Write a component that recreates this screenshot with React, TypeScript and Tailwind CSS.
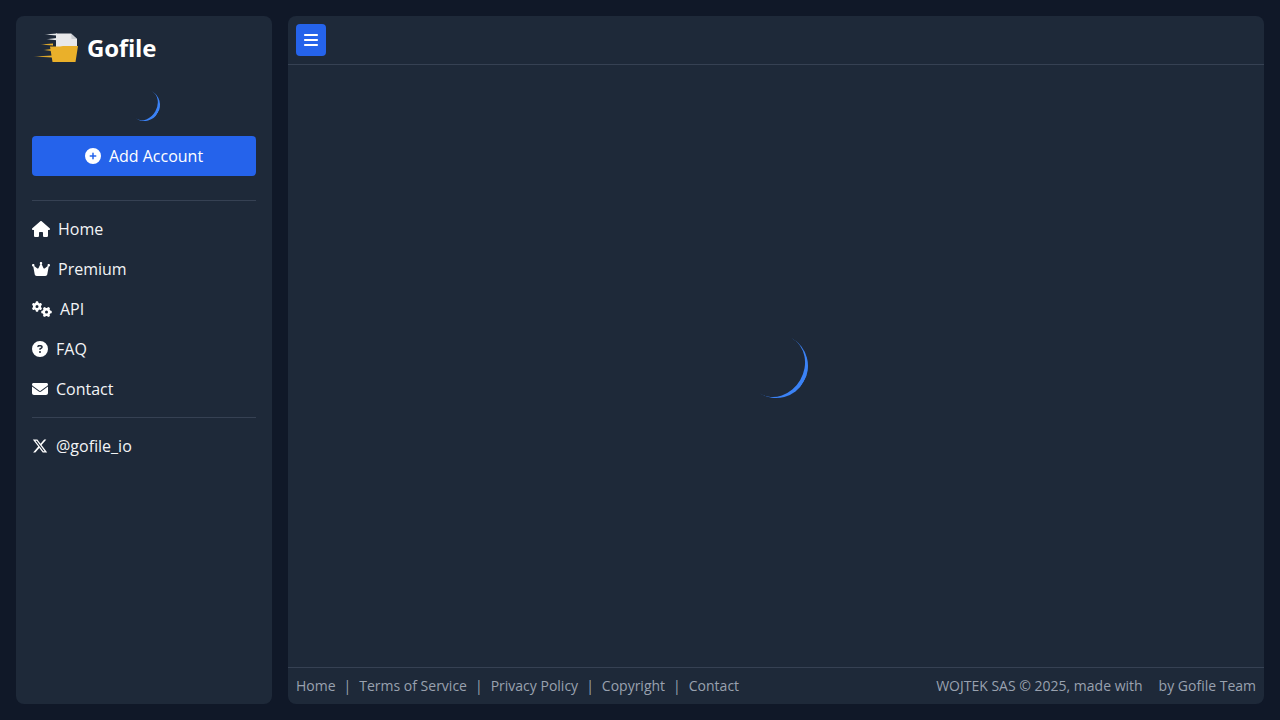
import React from "react";
import { FaHouse, FaCrown, FaGears, FaCircleQuestion, FaEnvelope, FaCirclePlus, FaBars, FaXTwitter } from "react-icons/fa6";

function Logo() {
  return (
    <svg width="48" height="32" viewBox="0 0 48 32" className="shrink-0">
      <defs>
        <linearGradient id="w" x1="0" x2="1" y1="0" y2="0">
          <stop offset="0" stopColor="#f3f4f6" stopOpacity="0.15" />
          <stop offset="0.4" stopColor="#f3f4f6" stopOpacity="0.85" />
          <stop offset="1" stopColor="#f3f4f6" />
        </linearGradient>
        <linearGradient id="y" x1="0" x2="1" y1="0" y2="0">
          <stop offset="0" stopColor="#f0b429" stopOpacity="0.15" />
          <stop offset="0.4" stopColor="#f0b429" stopOpacity="0.85" />
          <stop offset="1" stopColor="#f0b429" />
        </linearGradient>
      </defs>
      <polygon points="12,2.5 25,1.6 25,3.4" fill="url(#w)" />
      <polygon points="14,7.2 25,6 25,8.2" fill="url(#w)" />
      <polygon points="8,12.5 21,11.4 21,13.4" fill="url(#y)" />
      <polygon points="11,18 20,17 20,19" fill="url(#y)" />
      <polygon points="1,24.5 21,23.4 21,25.4" fill="url(#y)" />
      <path d="M24 1.5 L39 1.5 L45 7 L45 20 L24 20 Z" fill="#e8e8ea" />
      <path d="M39 1.5 L45 7 L39.5 7 Z" fill="#c9ccd2" />
      <path d="M18 14.5 L28 14.5 L31 14 L46 14 L43.5 30 L20.5 30 Z" fill="#eab02a" />
    </svg>
  );
}

function NavItem({ icon, label }: { icon: React.ReactNode; label: string }) {
  return (
    <a className="flex h-10 items-center gap-2 text-[#f3f4f6]">
      <span className="text-white">{icon}</span>
      <span>{label}</span>
    </a>
  );
}

function Sep() {
  return <span className="mx-2">|</span>;
}

export default function App() {
  return (
    <div
      className="flex h-screen w-full gap-4 overflow-hidden bg-[#101828] p-4 text-base text-white"
      style={{ fontFamily: '"Open Sans", sans-serif' }}
    >
      <aside className="flex w-64 shrink-0 flex-col rounded-lg bg-[#1e2939] p-4">
        <div className="flex h-8 items-center gap-[7px]">
          <Logo />
          <span className="text-2xl font-bold tracking-[-0.2px]">Gofile</span>
        </div>
        <div className="mt-[25px] mb-[15px] flex justify-center">
          <div className="h-8 w-8 rotate-[30deg] rounded-full border-r-[3px] border-[#3b82f6]" />
        </div>
        <button className="flex h-10 w-full items-center justify-center gap-2 rounded bg-[#2563eb] text-white">
          <FaCirclePlus className="h-4 w-4" />
          <span>Add Account</span>
        </button>
        <div className="mt-6 border-t border-[#364153]" />
        <nav className="mt-2 flex flex-col">
          <NavItem icon={<FaHouse className="h-4 w-[18px]" />} label="Home" />
          <NavItem icon={<FaCrown className="h-4 w-[18px]" />} label="Premium" />
          <NavItem icon={<FaGears className="h-4 w-5" />} label="API" />
          <NavItem icon={<FaCircleQuestion className="h-4 w-4" />} label="FAQ" />
          <NavItem icon={<FaEnvelope className="h-4 w-4" />} label="Contact" />
        </nav>
        <div className="mt-2 border-t border-[#364153]" />
        <nav className="mt-2">
          <NavItem icon={<FaXTwitter className="h-4 w-4" />} label="@gofile_io" />
        </nav>
      </aside>

      <main className="flex min-w-0 flex-1 flex-col rounded-lg bg-[#1e2939]">
        <header className="flex h-[49px] shrink-0 items-start border-b border-[#364153] px-2 pt-2">
          <button className="flex h-8 w-[30px] items-center justify-center rounded bg-[#2563eb] text-white">
            <FaBars className="h-4 w-[14px]" />
          </button>
        </header>
        <div className="flex flex-1 items-center justify-center">
          <div className="h-16 w-16 rotate-[30deg] rounded-full border-r-4 border-[#3b82f6]" />
        </div>
        <footer className="flex h-[37px] shrink-0 items-center justify-between border-t border-[#364153] px-2 text-sm text-[#99a1af]">
          <div className="flex items-center">
            <a>Home</a>
            <Sep />
            <a>Terms of Service</a>
            <Sep />
            <a>Privacy Policy</a>
            <Sep />
            <a>Copyright</a>
            <Sep />
            <a>Contact</a>
          </div>
          <div className="flex items-center gap-4">
            <span>WOJTEK SAS © 2025, made with</span>
            <span>by Gofile Team</span>
          </div>
        </footer>
      </main>
    </div>
  );
}
